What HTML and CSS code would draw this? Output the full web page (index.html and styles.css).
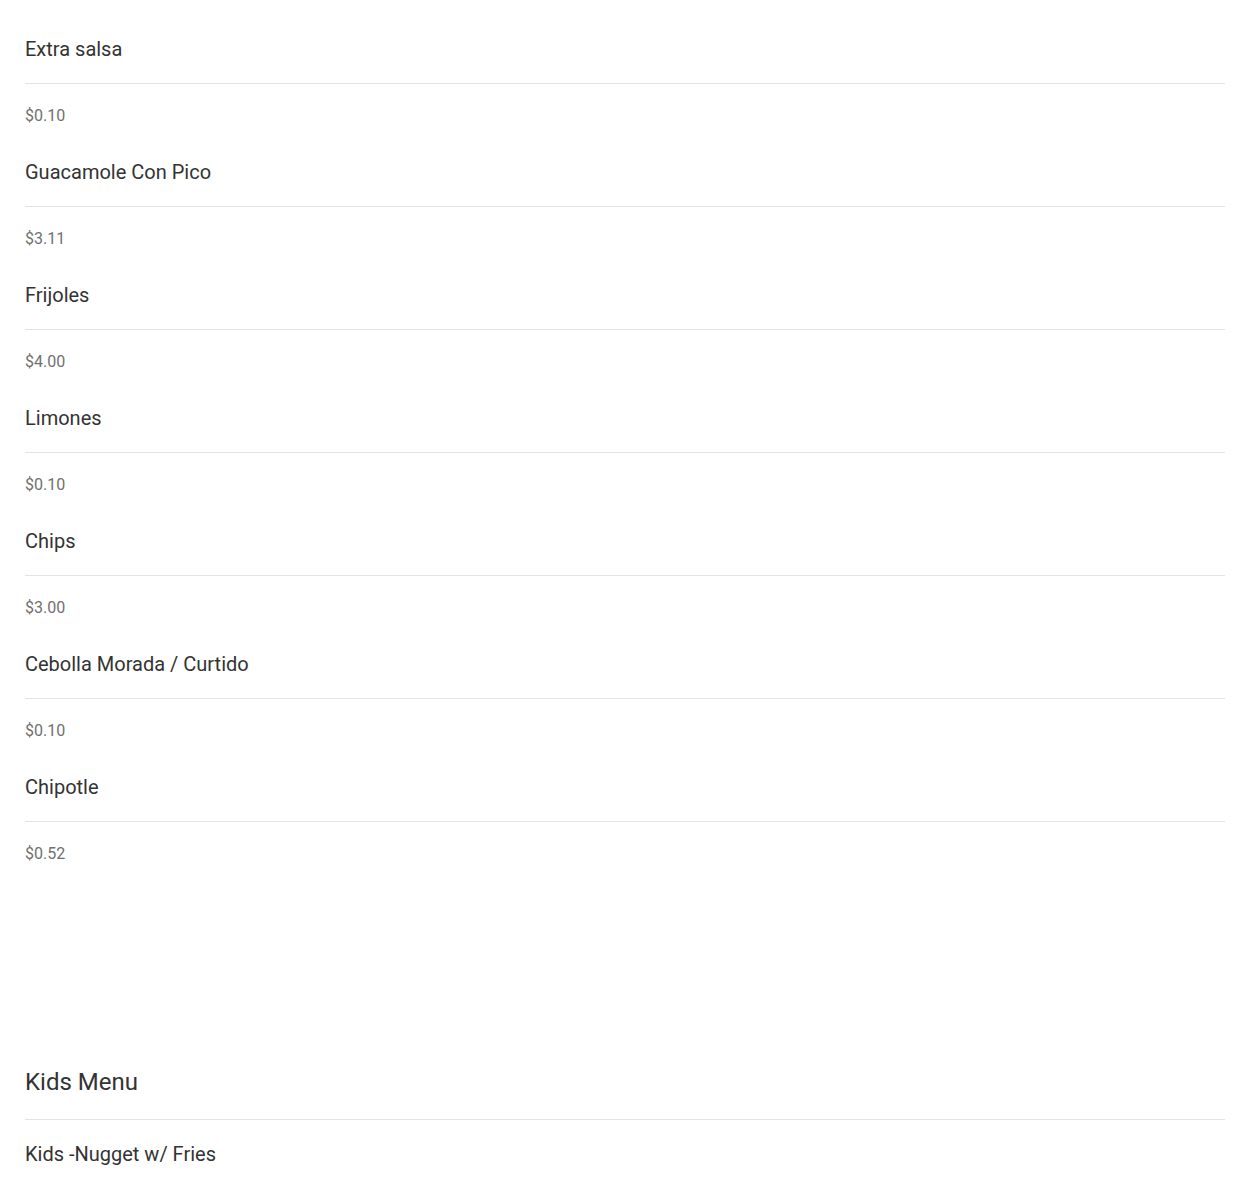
FILE: index.html
```html
<!DOCTYPE html>
<html lang="en">
<head>
  <meta charset="UTF-8">
  <title>Menu</title>
  <link rel="stylesheet" href="styles.css">
</head>
<body>
  <div class="menu">
    <!-- Extras -->
    <div class="section">
      <div class="item">
        <div class="item-name">Extra salsa</div>
        <div class="item-price">$0.10</div>
      </div>
      <div class="item">
        <div class="item-name">Guacamole Con Pico</div>
        <div class="item-price">$3.11</div>
      </div>
      <div class="item">
        <div class="item-name">Frijoles</div>
        <div class="item-price">$4.00</div>
      </div>
      <div class="item">
        <div class="item-name">Limones</div>
        <div class="item-price">$0.10</div>
      </div>
      <div class="item">
        <div class="item-name">Chips</div>
        <div class="item-price">$3.00</div>
      </div>
      <div class="item">
        <div class="item-name">Cebolla Morada / Curtido</div>
        <div class="item-price">$0.10</div>
      </div>
      <div class="item">
        <div class="item-name">Chipotle</div>
        <div class="item-price">$0.52</div>
      </div>
    </div>

    <!-- Kids -->
    <div class="section">
      <h2 class="section-title">Kids Menu</h2>
      <div class="item">
        <div class="item-name">Kids -Nugget w/ Fries</div>
      </div>
    </div>
  </div>
</body>
</html>
```

FILE: styles.css
```css
body {
  margin: 0;
  background: #fff;
  font-family: Roboto, "Liberation Sans", Arial, sans-serif;
  color: #333;
}
.menu {
  padding: 0 25px;
}
.section {
  padding-bottom: 204px;
}
.section-title {
  margin: 0;
  font-size: 24px;
  font-weight: 400;
  line-height: 28px;
  color: #333;
  padding-bottom: 23px;
  border-bottom: 1px solid #e4e4e4;
}
.item {
  padding-top: 37px;
}
.section-title + .item {
  padding-top: 22px;
}
.item + .item {
  padding-top: 34px;
}
.item-name {
  font-size: 20px;
  line-height: 24px;
  color: #333;
  padding-bottom: 22px;
  border-bottom: 1px solid #e4e4e4;
}
.section-title + .item .item-name {
  border-bottom: none;
}
.item-price {
  font-size: 16px;
  line-height: 20px;
  color: #707070;
  padding-top: 22px;
}
```
